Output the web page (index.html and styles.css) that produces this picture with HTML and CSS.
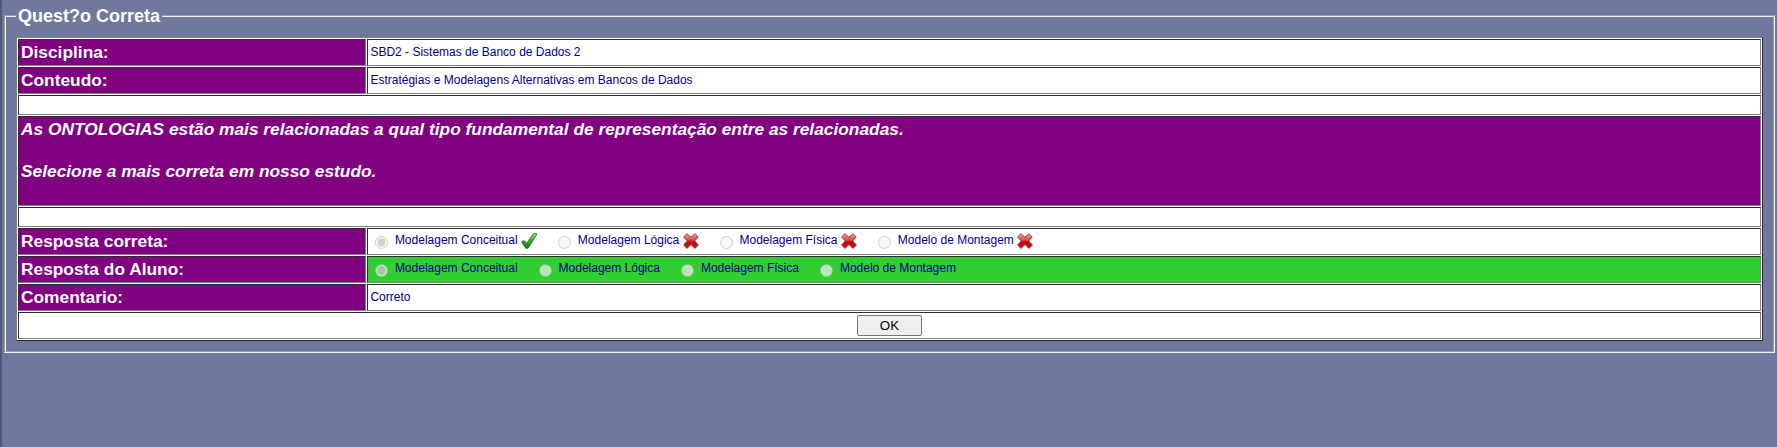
FILE: index.html
```html
<!DOCTYPE html>
<html lang="pt-BR">
<head>
<meta charset="utf-8">
<title>Questão Correta</title>
<link rel="stylesheet" href="styles.css">
</head>
<body>
<svg class="defs" width="0" height="0">
  <defs>
    <linearGradient id="green" x1="0" y1="0" x2="0" y2="1"><stop offset="0" stop-color="#8be07c"/><stop offset=".5" stop-color="#2fae22"/><stop offset="1" stop-color="#0a7a08"/></linearGradient>
    <linearGradient id="red" x1="0" y1="0" x2="0" y2="1"><stop offset="0" stop-color="#f2a0a0"/><stop offset=".45" stop-color="#dc4545"/><stop offset=".55" stop-color="#c80808"/><stop offset="1" stop-color="#d81010"/></linearGradient>
    <symbol id="check" viewBox="0 0 16 16"><path d="M.5 9 1.8 7.8 3.8 8 5.8 10.2 12 1.2 13.2.5 15.6.6 15.4 2.2 7.6 14.6 6.4 15.5 4.8 15.2Z" fill="url(#green)" stroke="#2a6a2a" stroke-width=".8" stroke-linejoin="round"/></symbol>
    <symbol id="cross" viewBox="0 0 16 16"><path d="M.6 4 4 .7 8 4.3 12 .7 15.2 4 11.7 8 15.4 12 12 15.4 8 11.6 4 15.4.6 12 4.3 8Z" fill="url(#red)" stroke="#7c3838" stroke-width=".9" stroke-linejoin="round"/></symbol>
  </defs>
</svg>
<fieldset class="question">
  <legend class="title">Quest?o Correta</legend>
  <table class="sheet">
    <colgroup><col class="label-col"><col></colgroup>
    <tr class="row"><th class="label">Disciplina:</th><td class="value">SBD2 - Sistemas de Banco de Dados 2</td></tr>
    <tr class="row"><th class="label">Conteudo:</th><td class="value">Estratégias e Modelagens Alternativas em Bancos de Dados</td></tr>
    <tr class="spacer"><td colspan="2"></td></tr>
    <tr class="statement-row"><td class="statement" colspan="2">As ONTOLOGIAS estão mais relacionadas a qual tipo fundamental de representação entre as relacionadas.<br><br>Selecione a mais correta em nosso estudo.</td></tr>
    <tr class="spacer"><td colspan="2"></td></tr>
    <tr class="row"><th class="label">Resposta correta:</th><td class="value choices"><div class="options">
      <label class="option"><input class="radio" type="radio" name="correct" disabled checked><span>Modelagem Conceitual</span><svg class="mark"><use href="#check"/></svg></label>
      <label class="option"><input class="radio" type="radio" name="correct" disabled><span>Modelagem Lógica</span><svg class="mark"><use href="#cross"/></svg></label>
      <label class="option"><input class="radio" type="radio" name="correct" disabled><span>Modelagem Física</span><svg class="mark"><use href="#cross"/></svg></label>
      <label class="option"><input class="radio" type="radio" name="correct" disabled><span>Modelo de Montagem</span><svg class="mark"><use href="#cross"/></svg></label>
    </div></td></tr>
    <tr class="row"><th class="label">Resposta do Aluno:</th><td class="value choices right"><div class="options">
      <label class="option"><input class="radio" type="radio" name="student" disabled checked><span>Modelagem Conceitual</span></label>
      <label class="option"><input class="radio" type="radio" name="student" disabled><span>Modelagem Lógica</span></label>
      <label class="option"><input class="radio" type="radio" name="student" disabled><span>Modelagem Física</span></label>
      <label class="option"><input class="radio" type="radio" name="student" disabled><span>Modelo de Montagem</span></label>
    </div></td></tr>
    <tr class="row"><th class="label">Comentario:</th><td class="value">Correto</td></tr>
    <tr class="row"><td class="actions" colspan="2"><button class="ok" type="button">OK</button></td></tr>
  </table>
</fieldset>
</body>
</html>
```

FILE: styles.css
```css
* { box-sizing: border-box; }
body {
  margin: 0;
  min-height: 447px;
  padding: 5px 2px 0;
  border-left: 2px solid #535878;
  background: #70799d;
  font-family: "Liberation Sans", Arial, sans-serif;
}
.defs { position: absolute; }
.question {
  margin: 0;
  padding: 10px;
  height: 348px;
  border: 2px groove #f3f1ec;
}
.title {
  padding: 0 2px;
  font-size: 18px;
  line-height: 22px;
  font-weight: bold;
  color: #fff;
}
.sheet {
  width: 100%;
  table-layout: fixed;
  border: 1px solid;
  border-color: #808080 #2c2c2c #2c2c2c #808080;
  border-spacing: 1px;
  background: #fff;
}
.label-col { width: 348px; }
.sheet td, .sheet th {
  padding: 0 2px;
  border: 1px solid;
  border-color: #2c2c2c #808080 #808080 #2c2c2c;
}
.row { height: 27px; }
.spacer { height: 20px; }
.statement-row { height: 90px; }
.sheet .label {
  background: #800080;
  color: #fff;
  font-size: 17.333px;
  line-height: 21px;
  text-align: left;
}
.sheet .value {
  padding: 5px 2px 0 2.4px;
  color: #00008b;
  font-size: 12px;
  line-height: 14px;
  vertical-align: top;
}
.sheet .choices { padding-top: 0; }
.value.right { background: #32cd32; }
.sheet .statement {
  padding-top: 2px;
  background: #800080;
  color: #fff;
  font-size: 17.333px;
  font-weight: bold;
  font-style: italic;
  line-height: 21px;
  vertical-align: top;
}
.options { display: flex; gap: 21.35px; padding-left: 4.9px; }
.option { display: flex; align-items: flex-start; height: 25px; }
.option span { margin: 4px 0 0 6.6px; }
.radio { width: 13px; height: 13px; margin: 7px 0 0; }
.mark { width: 16px; height: 16px; margin: 4px 0 0 3.3px; }
.sheet .actions { text-align: center; }
.ok {
  display: block;
  width: 65px;
  height: 21px;
  margin: 0 auto;
  padding: 0;
  border: 1px solid #767676;
  border-radius: 2px;
  background: #efefef;
  color: #000;
  font: 13.333px "Liberation Sans", Arial, sans-serif;
}
```
